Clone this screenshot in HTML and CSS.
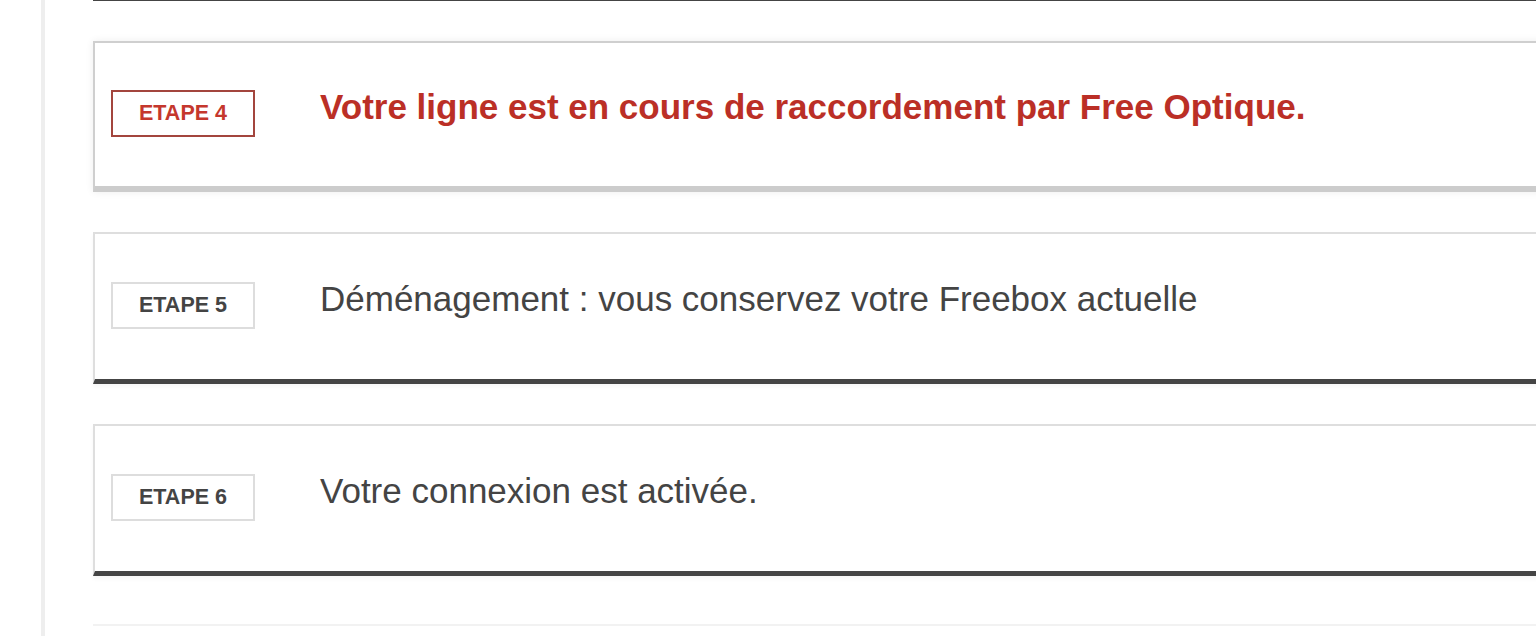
FILE: index.html
```html
<!DOCTYPE html>
<html lang="fr">
<head>
<meta charset="utf-8">
<title>Suivi de commande</title>
<link rel="stylesheet" href="styles.css">
</head>
<body>
<div class="page">
  <aside class="rail"></aside>
  <main class="steps">
    <div class="step step-prev"></div>
    <div class="step step-current">
      <span class="badge">ETAPE 4</span>
      <p class="label">Votre ligne est en cours de raccordement par Free Optique.</p>
    </div>
    <div class="step step-todo">
      <span class="badge">ETAPE 5</span>
      <p class="label">Déménagement : vous conservez votre Freebox actuelle</p>
    </div>
    <div class="step step-todo">
      <span class="badge">ETAPE 6</span>
      <p class="label">Votre connexion est activée.</p>
    </div>
    <div class="step step-next"></div>
  </main>
</div>
</body>
</html>
```
FILE: styles.css
```css
html, body {
  margin: 0;
  padding: 0;
  background: #ffffff;
  overflow: hidden;
  height: 636px;
}

body {
  font-family: "Liberation Sans", Arial, Helvetica, sans-serif;
  color: #444444;
}

.page {
  display: flex;
  align-items: stretch;
  min-height: 636px;
}

.rail {
  width: 41px;
  flex: 0 0 41px;
  border-right: 4px solid #eeeeee;
}

.steps {
  flex: 0 0 auto;
  width: 1600px;
  margin-left: 48px;
  display: flex;
  flex-direction: column;
  gap: 40px;
}

.step {
  box-sizing: border-box;
  height: 151px;
  display: flex;
  align-items: center;
  gap: 65px;
  padding-left: 16px;
  background: #ffffff;
}

.step-prev {
  height: 1px;
  background: #444444;
}

.step-current {
  border-top: 2px solid #cfcfcf;
  border-left: 2px solid #cfcfcf;
  border-bottom: 6px solid #cccccc;
  box-shadow: 0 0 8px rgba(0, 0, 0, 0.07);
  padding-bottom: 2px;
}

.step-todo {
  height: 152px;
  border-top: 2px solid #dedede;
  border-left: 2px solid #dedede;
  border-bottom: 5px solid #444444;
  box-shadow: 0 3px 4px rgba(0, 0, 0, 0.04);
  padding-bottom: 2px;
}

.step-next {
  margin-top: 8px;
  height: 20px;
  border-top: 2px solid #f2f2f2;
}

.badge {
  box-sizing: border-box;
  flex: 0 0 144px;
  width: 144px;
  height: 47px;
  display: flex;
  align-items: center;
  justify-content: center;
  font-size: 21.5px;
  font-weight: bold;
  border: 2px solid #dddddd;
  color: #444444;
}

.step-current .badge {
  border-color: #a3453d;
  color: #c5372d;
}

.label {
  margin: 0 0 14px 0;
  font-size: 35px;
  line-height: 40px;
  white-space: nowrap;
}

.step-current .label {
  font-weight: bold;
  color: #bb2f26;
}
```
